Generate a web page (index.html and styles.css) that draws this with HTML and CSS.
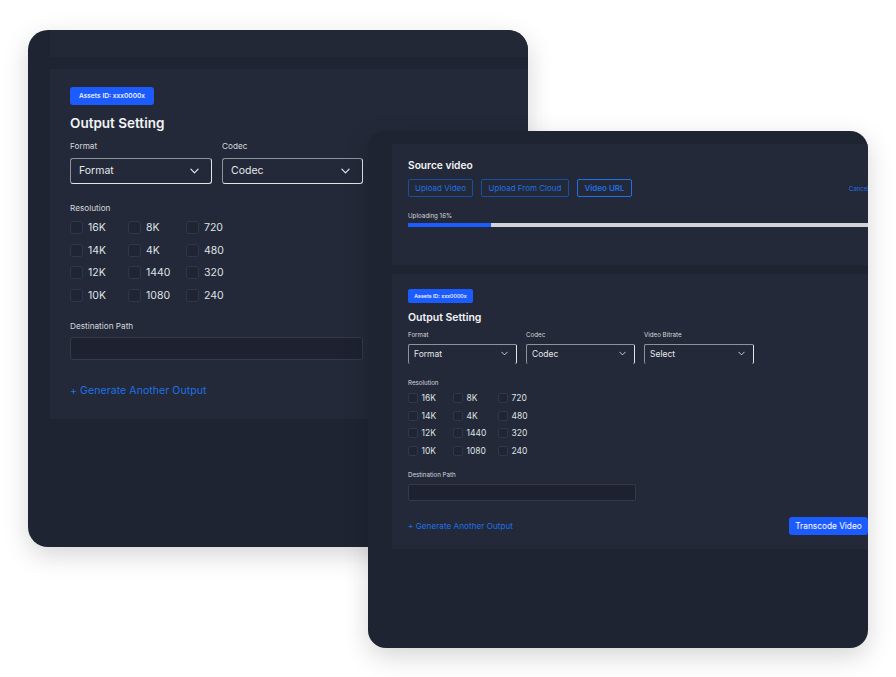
FILE: index.html
```html
<!DOCTYPE html>
<html lang="en">
<head>
<meta charset="utf-8">
<title>Transcode</title>
<link rel="stylesheet" href="styles.css">
</head>
<body>
<section class="win win-a">
  <div class="panel panel-stub"></div>
  <div class="panel panel-output">
    <span class="badge">Assets ID: xxx0000x</span>
    <h2 class="title">Output Setting</h2>
    <div class="selects">
      <div class="field"><label class="label">Format</label>
        <div class="select"><span>Format</span><svg class="chev" viewBox="0 0 10 6"><path d="M1 1l4 4 4-4"/></svg></div></div>
      <div class="field"><label class="label">Codec</label>
        <div class="select"><span>Codec</span><svg class="chev" viewBox="0 0 10 6"><path d="M1 1l4 4 4-4"/></svg></div></div>
    </div>
    <div class="label label-res">Resolution</div>
    <div class="checks">
      <div class="check"><i class="box"></i>16K</div><div class="check"><i class="box"></i>8K</div><div class="check"><i class="box"></i>720</div>
      <div class="check"><i class="box"></i>14K</div><div class="check"><i class="box"></i>4K</div><div class="check"><i class="box"></i>480</div>
      <div class="check"><i class="box"></i>12K</div><div class="check"><i class="box"></i>1440</div><div class="check"><i class="box"></i>320</div>
      <div class="check"><i class="box"></i>10K</div><div class="check"><i class="box"></i>1080</div><div class="check"><i class="box"></i>240</div>
    </div>
    <div class="label label-dest">Destination Path</div>
    <div class="input"></div>
    <div class="footer"><span class="link">+ Generate Another Output</span></div>
  </div>
</section>

<section class="win win-b">
  <div class="panel panel-source">
    <h2 class="title">Source video</h2>
    <div class="tabs">
      <span class="tab">Upload Video</span>
      <span class="tab">Upload From Cloud</span>
      <span class="tab tab-active">Video URL</span>
      <span class="cancel">Cancel</span>
    </div>
    <div class="label label-up">Uploading 16%</div>
    <div class="progress"><div class="progress-fill"></div></div>
  </div>
  <div class="panel panel-output">
    <span class="badge">Assets ID: xxx0000x</span>
    <h2 class="title">Output Setting</h2>
    <div class="selects">
      <div class="field"><label class="label">Format</label>
        <div class="select"><span>Format</span><svg class="chev" viewBox="0 0 10 6"><path d="M1 1l4 4 4-4"/></svg></div></div>
      <div class="field"><label class="label">Codec</label>
        <div class="select"><span>Codec</span><svg class="chev" viewBox="0 0 10 6"><path d="M1 1l4 4 4-4"/></svg></div></div>
      <div class="field"><label class="label">Video Bitrate</label>
        <div class="select"><span>Select</span><svg class="chev" viewBox="0 0 10 6"><path d="M1 1l4 4 4-4"/></svg></div></div>
    </div>
    <div class="label label-res">Resolution</div>
    <div class="checks">
      <div class="check"><i class="box"></i>16K</div><div class="check"><i class="box"></i>8K</div><div class="check"><i class="box"></i>720</div>
      <div class="check"><i class="box"></i>14K</div><div class="check"><i class="box"></i>4K</div><div class="check"><i class="box"></i>480</div>
      <div class="check"><i class="box"></i>12K</div><div class="check"><i class="box"></i>1440</div><div class="check"><i class="box"></i>320</div>
      <div class="check"><i class="box"></i>10K</div><div class="check"><i class="box"></i>1080</div><div class="check"><i class="box"></i>240</div>
    </div>
    <div class="label label-dest">Destination Path</div>
    <div class="input"></div>
    <div class="footer"><span class="link">+ Generate Another Output</span><span class="primary">Transcode Video</span></div>
  </div>
</section>
</body>
</html>
```
FILE: styles.css
```css
* { box-sizing: border-box; }
html, body { margin: 0; height: 100%; }
body {
  position: relative;
  width: 896px;
  height: 677px;
  overflow: hidden;
  background: #fff;
  font-family: Inter, "Liberation Sans", sans-serif;
  color: #e9ebef;
}

/* Windows sit on a free canvas */
.win {
  position: absolute;
  width: 500px;
  height: 517px;
  background: #1e2431;
  border-radius: 20px;
  box-shadow: 0 8px 26px rgba(0, 0, 0, .17);
  overflow: hidden;
  display: flex;
  flex-direction: column;
}
.win-a { left: 28px; top: 30px; }
.win-b { left: 368px; top: 131px; border-radius: 18px; }

.panel { background: #232938; flex: none; }
.title { margin: 0; font-weight: 600; color: #f2f3f6; }
.label { display: block; color: #d5d8de; }
.badge {
  display: flex;
  align-items: center;
  justify-content: center;
  background: #1c5cff;
  color: #fff;
  font-weight: 500;
}
.selects { display: grid; }
.select {
  display: flex;
  align-items: center;
  justify-content: space-between;
  border: 1px solid;
  border-color: #8e929b #e2e4e8 #e2e4e8 #8e929b;
  color: #e4e6ea;
}
.chev { fill: none; stroke: #e8eaee; stroke-linecap: round; stroke-linejoin: round; }
.checks { display: grid; }
.check { display: flex; align-items: center; color: #dfe1e6; }
.box { display: block; flex: none; background: #202533; border: 1px solid #30374a; }
.input { background: #1e2230; border: 1px solid #343a4c; }
.footer { display: flex; align-items: center; justify-content: space-between; }
.link { color: #1f70e6; }

/* Window A: larger scale */
.win-a .panel-stub { height: 27px; margin-left: 22px; background: #222835; }
.win-a .panel-output { height: 350px; margin: 12px 0 0 22px; padding: 18px 0 0 20px; }
.win-a .badge { width: 84px; height: 18px; font-size: 6.7px; border-radius: 3px; }
.win-a .title { margin-top: 9px; font-size: 13.5px; line-height: 18px; }
.win-a .label { font-size: 8.2px; line-height: 12px; }
.win-a .selects { margin-top: 8px; width: 293px; grid-template-columns: 142px 141px; column-gap: 10px; }
.win-a .select { margin-top: 6px; height: 26px; padding: 0 12px 1px 8px; border-radius: 3px; font-size: 10.5px; }
.win-a .chev { width: 9px; height: 6px; stroke-width: 1.3; }
.win-a .label-res { margin-top: 18px; }
.win-a .checks { margin-top: 7px; grid-template-columns: repeat(3, 58px); width: 174px; row-gap: 9.7px; }
.win-a .check { height: 13px; font-size: 10.5px; }
.win-a .box { width: 13px; height: 13px; margin-right: 5px; border-radius: 3px; }
.win-a .label-dest { margin-top: 18px; }
.win-a .input { margin-top: 5px; width: 293px; height: 23px; border-radius: 3px; }
.win-a .footer { margin-top: 22px; height: 16px; }
.win-a .link { font-size: 10.5px; letter-spacing: .08px; }

/* Window B: smaller scale */
.win-b .panel-source { height: 121px; margin: 13px 0 0 24px; padding: 14px 0 0 16px; }
.win-b .panel-output { height: 275px; margin: 9px 0 0 24px; padding: 15px 0 0 16px; }
.win-b .title { font-size: 10.5px; line-height: 14px; }
.win-b .panel-source .title { font-size: 10.2px; line-height: 15px; }
.win-b .panel-output .title { margin-top: 8px; }
.win-b .tabs { display: flex; align-items: center; margin-top: 6px; height: 18px; column-gap: 8px; }
.tab {
  display: flex;
  align-items: center;
  justify-content: center;
  height: 18px;
  border: 1px solid #17509f;
  border-radius: 2px;
  color: #1f70e6;
  font-size: 8px;
}
.tab:nth-child(1) { width: 65px; }
.tab:nth-child(2) { width: 88px; }
.tab-active { width: 55px; border-color: #1f70e6; font-weight: 600; }
.cancel { margin-left: auto; margin-right: -11px; width: 30px; flex: none; color: #1f70e6; font-size: 6px; white-space: nowrap; }
.win-b .label { font-size: 6.2px; line-height: 8px; }
.win-b .label-up { margin-top: 15px; }
.progress { margin-top: 3px; height: 4px; background: #d2d3d6; }
.progress-fill { width: 83px; height: 100%; background: #1c5cff; }
.win-b .badge { width: 65px; height: 14px; font-size: 5.3px; border-radius: 2px; }
.win-b .selects { margin-top: 6px; width: 346px; grid-template-columns: 109px 109px 110px; column-gap: 9px; }
.win-b .select { margin-top: 5px; height: 20px; padding: 0 8px 2px 5px; border-bottom: 0; border-radius: 2px; font-size: 8.5px; }
.win-b .chev { width: 7px; height: 5px; stroke-width: 1.2; }
.win-b .label-res { margin-top: 15px; }
.win-b .checks { margin-top: 6px; grid-template-columns: repeat(3, 45px); width: 135px; row-gap: 7.7px; }
.win-b .check { height: 10px; font-size: 8.5px; }
.win-b .box { width: 10px; height: 10px; margin-right: 3.5px; border-radius: 2px; }
.win-b .label-dest { margin-top: 15px; }
.win-b .input { margin-top: 5px; width: 228px; height: 17px; border-radius: 2px; }
.win-b .footer { margin-top: 16px; height: 18px; }
.win-b .link { font-size: 8.2px; }
.primary {
  display: flex;
  align-items: center;
  justify-content: center;
  width: 79px;
  height: 18px;
  background: #1c5cff;
  border-radius: 3px;
  color: #fff;
  font-size: 8.3px;
}
```
